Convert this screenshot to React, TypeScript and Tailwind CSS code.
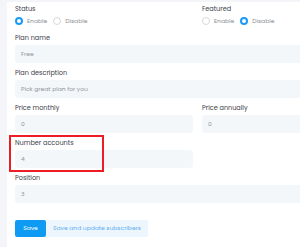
import React from "react";

function Radio({ checked, label }: { checked: boolean; label: string }) {
  return (
    <div className="flex items-center gap-[4px]">
      {checked ? (
        <span className="block w-[8px] h-[8px] rounded-full border-[2.5px] border-[#1a9af7] bg-white" />
      ) : (
        <span className="block w-[8px] h-[8px] rounded-full border border-[#d5d9de] bg-white" />
      )}
      <span className="text-[6px] leading-[8px] text-[#8a8f96]">{label}</span>
    </div>
  );
}

function Field({ label, value }: { label: string; value: string }) {
  return (
    <div className="flex flex-col">
      <div className="h-[8px] text-[6.5px] leading-[8px] text-[#3d4148] mb-[3px]">{label}</div>
      <div className="h-[18px] rounded-[3px] bg-[#f4f7fa] flex items-center pl-[6px] text-[6px] text-[#8f949b]">
        {value}
      </div>
    </div>
  );
}

export default function App() {
  return (
    <div
      className="relative w-[300px] h-[247px] overflow-hidden bg-[#f3f5f8]"
      style={{ fontFamily: "Poppins, Inter, 'Noto Sans', sans-serif" }}
    >
      <div className="absolute left-[7px] top-[2px] w-[400px] h-[260px] bg-white" />
      <div className="relative pl-[15px] pt-[5px] w-[380px] flex flex-col">
        <div className="grid grid-cols-2 gap-x-[9px]">
          <div className="flex flex-col">
            <div className="h-[8px] text-[6.5px] leading-[8px] text-[#3d4148]">Status</div>
            <div className="mt-[4px] flex items-center gap-[6px] h-[8px]">
              <Radio checked label="Enable" />
              <Radio checked={false} label="Disable" />
            </div>
          </div>
          <div className="flex flex-col">
            <div className="h-[8px] text-[6.5px] leading-[8px] text-[#3d4148]">Featured</div>
            <div className="mt-[4px] flex items-center gap-[6px] h-[8px]">
              <Radio checked={false} label="Enable" />
              <Radio checked label="Disable" />
            </div>
          </div>
        </div>
        <div className="mt-[9px] flex flex-col gap-[6px]">
          <Field label="Plan name" value="Free" />
          <Field label="Plan description" value="Pick great plan for you" />
          <div className="grid grid-cols-2 gap-x-[9px]">
            <Field label="Price monthly" value="0" />
            <Field label="Price annually" value="0" />
          </div>
          <div className="grid grid-cols-2 gap-x-[9px]">
            <Field label="Number accounts" value="4" />
          </div>
          <Field label="Position" value="3" />
        </div>
        <div className="mt-[17px] flex">
          <button className="h-[17px] w-[31px] rounded-[2px] bg-[#0f9bf4] text-white text-[6px] flex items-center justify-center">
            Save
          </button>
          <button className="h-[17px] w-[102px] rounded-[2px] bg-[#eef6fd] text-[#5aaef0] text-[6px] flex items-center justify-center">
            Save and update subscribers
          </button>
        </div>
      </div>
      <div className="absolute left-[9px] top-[135px] w-[95px] h-[37px] border-2 border-[#ee1c24]" />
    </div>
  );
}
